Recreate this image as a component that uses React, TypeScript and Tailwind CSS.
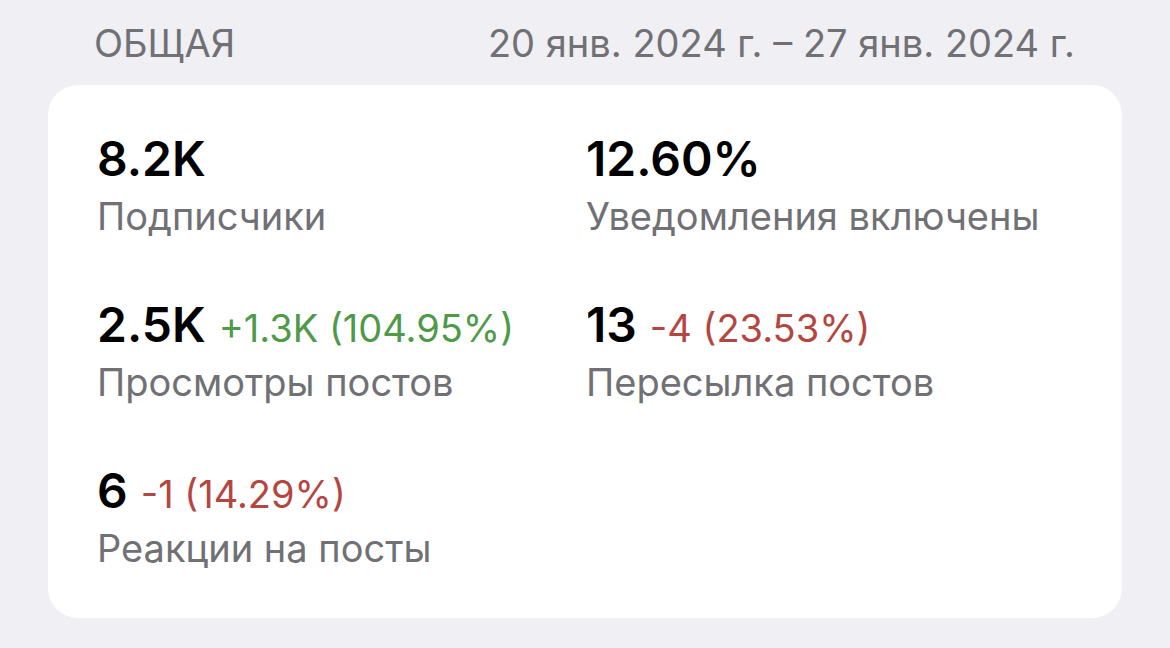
const stats = [
  { value: '8.2K', label: 'Подписчики' },
  { value: '12.60%', label: 'Уведомления включены' },
  { value: '2.5K', delta: '+1.3K (104.95%)', up: true, label: 'Просмотры постов' },
  { value: '13', delta: '-4 (23.53%)', up: false, label: 'Пересылка постов' },
  { value: '6', delta: '-1 (14.29%)', up: false, label: 'Реакции на посты' },
];

export default function App() {
  return (
    <div
      className="w-[1170px] h-[648px] bg-[#efeff4] px-[48px] pt-[20px]"
      style={{ fontFamily: 'Inter, "Noto Sans", sans-serif' }}
    >
      <div className="flex justify-between items-center pl-[46px] pr-[47px] h-[46px] text-[38px] text-[#707075]">
        <span>ОБЩАЯ</span>
        <span>20 янв. 2024 г. – 27 янв. 2024 г.</span>
      </div>
      <div className="mt-[19px] bg-white rounded-[30px] h-[533px] pl-[49px] pt-[50px] grid grid-cols-[489px_1fr] auto-rows-[166px]">
        {stats.map((s) => (
          <div key={s.label} className="flex flex-col">
            <div className="flex items-baseline gap-[13px] h-[52px]">
              <span className="text-[48px] font-semibold text-black leading-none">{s.value}</span>
              {s.delta && (
                <span className={`text-[38px] leading-none ${s.up ? 'text-[#4e9a48]' : 'text-[#b5463f]'}`}>
                  {s.delta}
                </span>
              )}
            </div>
            <span className="text-[38px] text-[#707075] leading-none mt-[10px]">{s.label}</span>
          </div>
        ))}
      </div>
    </div>
  );
}
